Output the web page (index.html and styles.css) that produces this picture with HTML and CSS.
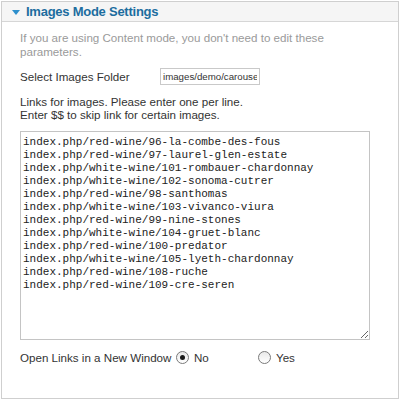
FILE: index.html
```html
<!DOCTYPE html>
<html>
<head>
<meta charset="utf-8">
<link rel="stylesheet" href="styles.css">
</head>
<body>
<div class="panel">
  <div class="panel-head">
    <span class="arrow"></span>
    <span class="title">Images Mode Settings</span>
  </div>
  <div class="panel-body">
    <p class="desc">If you are using Content mode, you don't need to edit these parameters.</p>
    <div class="field-row">
      <label class="field-label">Select Images Folder</label>
      <input class="text-input" type="text" value="images/demo/carousel">
    </div>
    <p class="hint">Links for images. Please enter one per line.<br>Enter $$ to skip link for certain images.</p>
    <textarea class="links" spellcheck="false">index.php/red-wine/96-la-combe-des-fous
index.php/red-wine/97-laurel-glen-estate
index.php/white-wine/101-rombauer-chardonnay
index.php/white-wine/102-sonoma-cutrer
index.php/red-wine/98-santhomas
index.php/white-wine/103-vivanco-viura
index.php/red-wine/99-nine-stones
index.php/white-wine/104-gruet-blanc
index.php/red-wine/100-predator
index.php/white-wine/105-lyeth-chardonnay
index.php/red-wine/108-ruche
index.php/red-wine/109-cre-seren</textarea>
    <div class="radio-row">
      <span class="radio-label">Open Links in a New Window</span>
      <label class="option option-no"><span class="radio checked"></span>No</label>
      <label class="option"><span class="radio"></span>Yes</label>
    </div>
  </div>
</div>
</body>
</html>
```
FILE: styles.css
```css
html, body {
  margin: 0;
  padding: 0;
  background: #fff;
}
body {
  font-family: "Liberation Sans", Arial, sans-serif;
  font-size: 11.6px;
  color: #333;
}
.panel {
  box-sizing: border-box;
  width: 398px;
  height: 398px;
  margin: 1px 0 0 1px;
  border: 1px solid #cfcfcf;
}
.panel-head {
  height: 19px;
  background: #f5f5f5;
  border-bottom: 1px solid #d6d6d6;
  display: flex;
  align-items: center;
  padding-left: 10px;
}
.arrow {
  width: 0;
  height: 0;
  border-left: 4px solid transparent;
  border-right: 4px solid transparent;
  border-top: 5px solid #2d8fcc;
  margin-right: 6px;
  margin-top: 1px;
}
.title {
  font-weight: bold;
  font-size: 13px;
  letter-spacing: -0.25px;
  color: #1c6d9f;
  line-height: 19px;
}
.panel-body {
  padding: 9px 0 0 18px;
}
.desc {
  margin: 0;
  color: #9a9a9a;
  line-height: 14px;
  width: 345px;
}
.field-row {
  display: flex;
  align-items: center;
  margin-top: 9px;
  height: 17px;
}
.field-label {
  width: 140px;
  flex-shrink: 0;
}
.text-input {
  box-sizing: border-box;
  width: 100px;
  height: 17px;
  margin: 0;
  padding: 0 2px;
  border: 1px solid #c9c9c9;
  font-family: "Liberation Sans", Arial, sans-serif;
  font-size: 9.7px;
  color: #333;
  outline: none;
}
.hint {
  margin: 10px 0 0 0;
  line-height: 13px;
}
.links {
  display: block;
  box-sizing: border-box;
  width: 350px;
  height: 209px;
  margin: 10px 0 0 0;
  padding: 4px 2px;
  border: 1px solid #c4c4c4;
  font-family: "Liberation Mono", "Courier New", monospace;
  font-size: 11px;
  line-height: 13px;
  color: #222;
  outline: none;
  overflow: hidden;
}
.radio-row {
  display: flex;
  align-items: center;
  margin-top: 10px;
  height: 14px;
  white-space: nowrap;
}
.radio-label {
  width: 156px;
  flex-shrink: 0;
}
.option {
  display: flex;
  align-items: center;
  flex-shrink: 0;
}
.option-no {
  width: 82px;
}
.radio {
  box-sizing: border-box;
  width: 13px;
  height: 13px;
  border-radius: 50%;
  border: 1px solid #7a7a7a;
  background: linear-gradient(#e9e9e9, #ffffff);
  margin-right: 5px;
  position: relative;
}
.radio.checked::after {
  content: "";
  position: absolute;
  left: 3px;
  top: 3px;
  width: 5px;
  height: 5px;
  border-radius: 50%;
  background: #1a1a1a;
}
```
